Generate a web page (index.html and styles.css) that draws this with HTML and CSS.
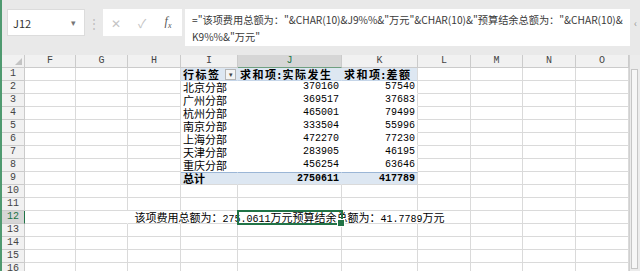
FILE: index.html
```html
<!DOCTYPE html>
<html lang="zh-CN">
<head>
  <meta charset="UTF-8">
  <title>数据透视表</title>
  <link rel="stylesheet" href="styles.css">
</head>
<body>
  <div class="app">
    <div class="toolbar">
      <div class="namebox"><span>J12</span><span class="dd">▾</span></div>
      <div class="grip">⋮</div>
      <div class="fxbox">
        <span class="tool">✕</span>
        <span class="tool">✓</span>
        <span class="tool fx">f<sub>x</sub></span>
      </div>
      <div class="formula">="该项费用总额为："&amp;CHAR(10)&amp;J9%%&amp;"万元"&amp;CHAR(10)&amp;"预算结余总额为："&amp;CHAR(10)&amp;<br>K9%%&amp;"万元"</div>
      <div class="expand">‹</div>
    </div>

    <div class="sheetwrap">
      <div class="sheet">
        <!-- column headers -->
        <div class="c corner"></div><div class="c ch">F</div><div class="c ch">G</div><div class="c ch">H</div><div class="c ch">I</div><div class="c ch act">J</div><div class="c ch">K</div><div class="c ch">L</div><div class="c ch">M</div><div class="c ch">N</div><div class="c ch">O</div>

        <div class="c rh">1</div><div class="c"></div><div class="c"></div><div class="c"></div>
        <div class="c ph label">行标签<span class="filter">▾</span></div><div class="c ph">求和项:实际发生</div><div class="c ph pk">求和项:差额</div>
        <div class="c"></div><div class="c"></div><div class="c"></div><div class="c"></div>

        <div class="c rh">2</div><div class="c"></div><div class="c"></div><div class="c"></div>
        <div class="c pv">北京分部</div><div class="c pv n">370160</div><div class="c pv pk n">57540</div>
        <div class="c"></div><div class="c"></div><div class="c"></div><div class="c"></div>

        <div class="c rh">3</div><div class="c"></div><div class="c"></div><div class="c"></div>
        <div class="c pv">广州分部</div><div class="c pv n">369517</div><div class="c pv pk n">37683</div>
        <div class="c"></div><div class="c"></div><div class="c"></div><div class="c"></div>

        <div class="c rh">4</div><div class="c"></div><div class="c"></div><div class="c"></div>
        <div class="c pv">杭州分部</div><div class="c pv n">465001</div><div class="c pv pk n">79499</div>
        <div class="c"></div><div class="c"></div><div class="c"></div><div class="c"></div>

        <div class="c rh">5</div><div class="c"></div><div class="c"></div><div class="c"></div>
        <div class="c pv">南京分部</div><div class="c pv n">333504</div><div class="c pv pk n">55996</div>
        <div class="c"></div><div class="c"></div><div class="c"></div><div class="c"></div>

        <div class="c rh">6</div><div class="c"></div><div class="c"></div><div class="c"></div>
        <div class="c pv">上海分部</div><div class="c pv n">472270</div><div class="c pv pk n">77230</div>
        <div class="c"></div><div class="c"></div><div class="c"></div><div class="c"></div>

        <div class="c rh">7</div><div class="c"></div><div class="c"></div><div class="c"></div>
        <div class="c pv">天津分部</div><div class="c pv n">283905</div><div class="c pv pk n">46195</div>
        <div class="c"></div><div class="c"></div><div class="c"></div><div class="c"></div>

        <div class="c rh">8</div><div class="c"></div><div class="c"></div><div class="c"></div>
        <div class="c pv">重庆分部</div><div class="c pv n">456254</div><div class="c pv pk n">63646</div>
        <div class="c"></div><div class="c"></div><div class="c"></div><div class="c"></div>

        <div class="c rh">9</div><div class="c"></div><div class="c"></div><div class="c"></div>
        <div class="c pt">总计</div><div class="c pt n">2750611</div><div class="c pt pk n">417789</div>
        <div class="c"></div><div class="c"></div><div class="c"></div><div class="c"></div>

        <div class="c rh">10</div><div class="c"></div><div class="c"></div><div class="c"></div><div class="c"></div><div class="c"></div><div class="c"></div><div class="c"></div><div class="c"></div><div class="c"></div><div class="c"></div>
        <div class="c rh">11</div><div class="c"></div><div class="c"></div><div class="c"></div><div class="c"></div><div class="c"></div><div class="c"></div><div class="c"></div><div class="c"></div><div class="c"></div><div class="c"></div>

        <div class="c rh act">12</div><div class="c"></div><div class="c ov"></div><div class="c ov"></div><div class="c ov"></div>
        <div class="c sel"><span class="txt">该项费用总额为：<span class="d">275.0611</span>万元预算结余总额为：<span class="d">41.7789</span>万元</span></div>
        <div class="c ov"></div><div class="c"></div><div class="c"></div><div class="c"></div><div class="c"></div>

        <div class="c rh">13</div><div class="c"></div><div class="c"></div><div class="c"></div><div class="c"></div><div class="c"></div><div class="c"></div><div class="c"></div><div class="c"></div><div class="c"></div><div class="c"></div>
        <div class="c rh">14</div><div class="c"></div><div class="c"></div><div class="c"></div><div class="c"></div><div class="c"></div><div class="c"></div><div class="c"></div><div class="c"></div><div class="c"></div><div class="c"></div>
        <div class="c rh">15</div><div class="c"></div><div class="c"></div><div class="c"></div><div class="c"></div><div class="c"></div><div class="c"></div><div class="c"></div><div class="c"></div><div class="c"></div><div class="c"></div>
        <div class="c rh">16</div><div class="c"></div><div class="c"></div><div class="c"></div><div class="c"></div><div class="c"></div><div class="c"></div><div class="c"></div><div class="c"></div><div class="c"></div><div class="c"></div>
      </div>
      <div class="vscroll"><div class="thumb"></div></div>
    </div>
  </div>
</body>
</html>
```

FILE: styles.css
```css
* {
  box-sizing: border-box;
}
body {
  margin: 0;
  width: 640px;
  height: 271px;
  overflow: hidden;
  background: #e9e9e9;
  font-family: "Noto Sans CJK SC", sans-serif;
}
.app {
  height: 271px;
  border-left: 2px solid #4f9a70;
}

/* formula bar */
.toolbar {
  height: 55px;
  display: flex;
  align-items: flex-start;
  padding: 9px 0 0 5px;
}
.namebox {
  width: 78px;
  height: 27px;
  background: #fff;
  border: 1px solid #dcdcdc;
  display: flex;
  align-items: center;
  justify-content: space-between;
  padding: 0 8px 0 5px;
  font-size: 11px;
  color: #333;
}
.namebox .dd {
  font-size: 9px;
  color: #777;
}
.grip {
  width: 18px;
  height: 27px;
  display: flex;
  align-items: center;
  justify-content: center;
  color: #bdbdbd;
  font-size: 12px;
}
.fxbox {
  width: 79px;
  height: 27px;
  background: #fff;
  display: flex;
  align-items: center;
}
.tool {
  width: 26px;
  text-align: center;
  color: #c4c4c4;
  font-size: 12px;
}
.tool.fx {
  color: #555;
  font-family: "Liberation Serif", serif;
  font-style: italic;
  font-size: 12px;
}
.tool.fx sub {
  font-size: 8px;
}
.formula {
  width: 445px;
  height: 37px;
  margin-left: 3px;
  background: #fff;
  padding: 2px 0 0 7px;
  font-size: 10.2px;
  line-height: 17px;
  color: #3a3a3a;
  white-space: nowrap;
  overflow: hidden;
}
.expand {
  margin: 6px 0 0 4px;
  color: #999;
  font-size: 10px;
}

/* sheet */
.sheetwrap {
  display: flex;
}
.sheet {
  display: grid;
  grid-template-columns: 23px 51px 52px 53px 57px 104px 76px 53px 52px 53px 53px;
  grid-auto-rows: 13px;
  background: #fff;
}
.c {
  border-right: 1px solid #dadada;
  border-bottom: 1px solid #dadada;
  font-size: 11px;
  line-height: 12px;
  padding: 0 2px;
  white-space: nowrap;
  overflow: hidden;
  color: #000;
}
.ch, .rh, .corner {
  background: #f1f1f1;
  border-color: #cbcbcb;
  color: #444;
  text-align: center;
  font-family: "Liberation Mono", "Noto Sans CJK SC", monospace;
  font-size: 10px;
}
.corner {
  display: flex;
  align-items: flex-end;
  justify-content: flex-end;
  padding: 2px;
}
.corner::after {
  content: '';
  border-left: 7px solid transparent;
  border-bottom: 7px solid #c3c3c3;
}
.ch.act {
  background: #d6d6d6;
  color: #217346;
  border-bottom-color: #6f9f80;
}
.rh.act {
  background: #d6d6d6;
  color: #217346;
  border-right-color: #217346;
}

/* pivot table */
.pv {
  border-right-color: #fff;
  border-bottom-color: #fff;
  overflow: visible;
}
.ph {
  background: #dde7f2;
  border-right-color: #dde7f2;
  border-bottom-color: #c5d5e8;
  font-weight: bold;
  letter-spacing: 1.5px;
  overflow: visible;
}
.label {
  display: flex;
  align-items: center;
  justify-content: space-between;
  padding-right: 1px;
}
.filter {
  width: 11px;
  height: 11px;
  background: #f4f4f4;
  border: 1px solid #b5b5b5;
  font-size: 7px;
  line-height: 9px;
  text-align: center;
  color: #444;
  letter-spacing: 0;
  font-weight: normal;
}
.pt {
  background: #dde7f2;
  border-top: 1px solid #9bb6d6;
  border-right-color: #dde7f2;
  font-weight: bold;
  line-height: 11px;
  overflow: visible;
}
.pk {
  border-right-color: #dadada;
}
.n {
  text-align: right;
  font-family: "Liberation Mono", monospace;
  font-size: 10px;
  letter-spacing: 0;
}

/* row 12 overflow text + selection */
.ov {
  border-right-color: transparent;
}
.sel {
  position: relative;
  z-index: 1;
  overflow: visible;
  display: flex;
  justify-content: center;
  outline: 2px solid #217346;
  outline-offset: -1px;
}
.sel .txt {
  white-space: nowrap;
}
.d {
  font-family: "Liberation Mono", monospace;
  font-size: 10px;
}
.sel::after {
  content: '';
  position: absolute;
  right: -4px;
  bottom: -4px;
  width: 6px;
  height: 6px;
  background: #217346;
  border: 1px solid #fff;
}

.vscroll {
  width: 11px;
  height: 216px;
  background: #ececec;
  border-left: 1px solid #d0d0d0;
  padding: 14px 0 0 1px;
}
.thumb {
  width: 7px;
  height: 200px;
  background: #f7f7f7;
  border: 1px solid #c6c6c6;
}
```
